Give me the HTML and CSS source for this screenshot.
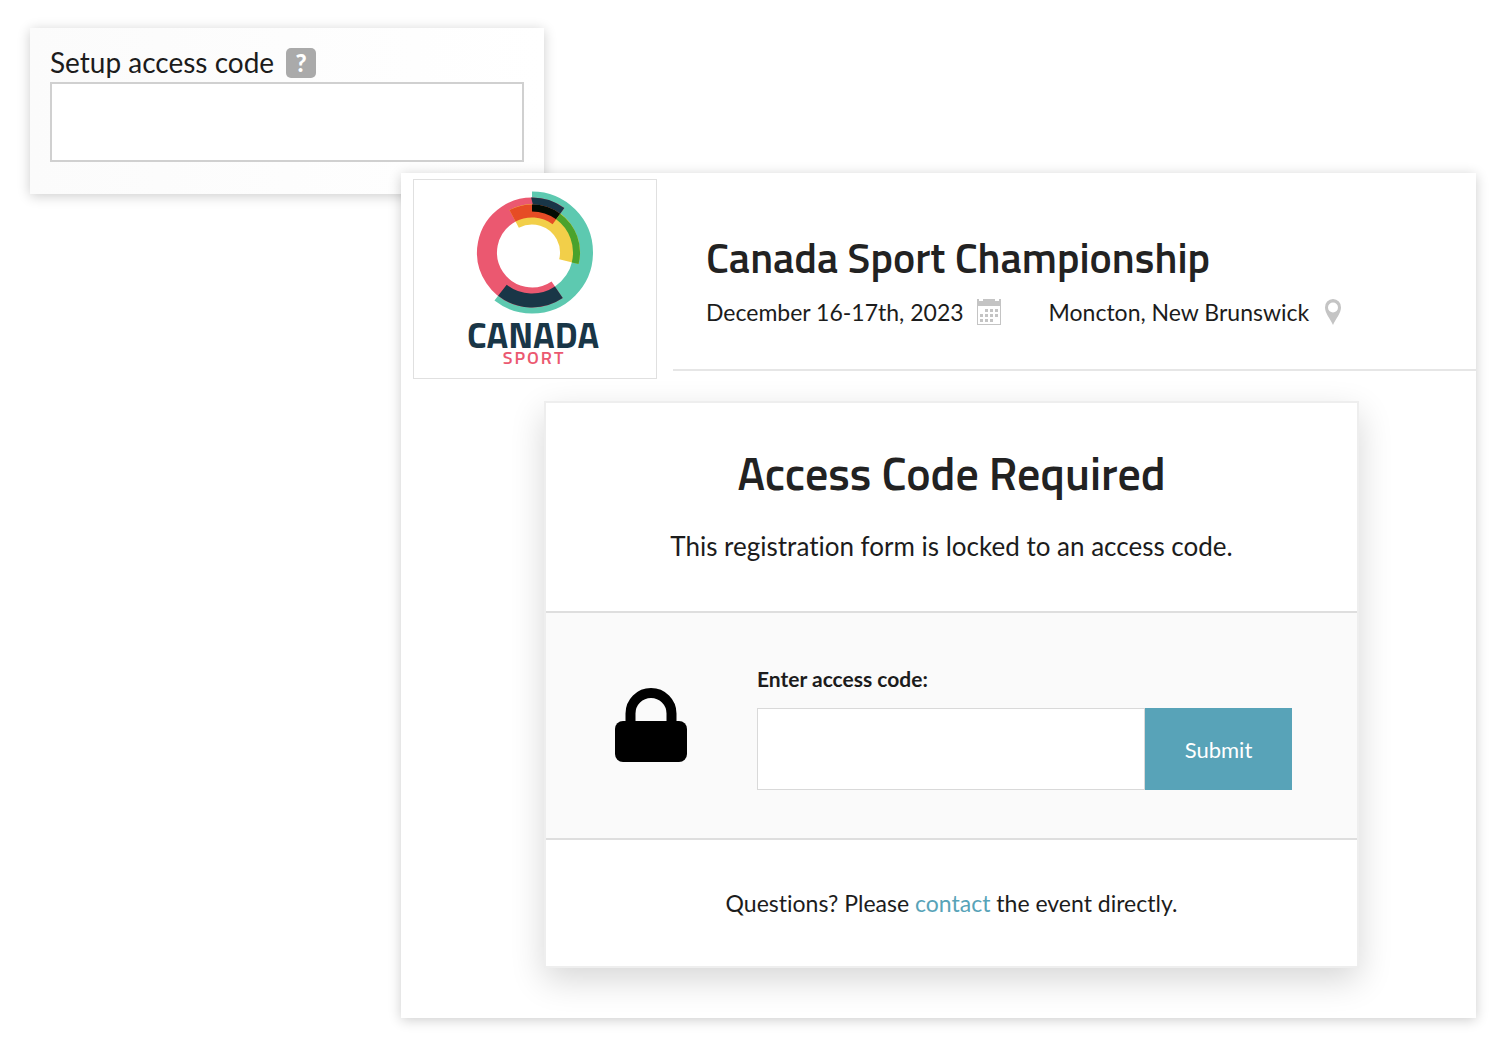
FILE: index.html
```html
<!DOCTYPE html>
<html lang="en">
<head>
<meta charset="utf-8">
<title>Canada Sport Championship</title>
<link rel="stylesheet" href="styles.css">
</head>
<body>
<div class="page">
  <section class="setup">
    <div class="setup-head">
      <label for="setup-code">Setup access code</label>
      <button class="help" type="button" aria-label="Help">?</button>
    </div>
    <input class="setup-input" id="setup-code" type="text">
  </section>

  <main class="event">
    <header class="event-header">
      <div class="logo">
        <svg viewBox="0 0 242 198" role="img" aria-label="Canada Sport">
          <g transform="translate(118 72.5)" fill="none">
            <g transform="rotate(-90)">
              <circle r="51" pathLength="360" stroke="#5dc9b0" stroke-width="20" stroke-dasharray="218 142"/>
              <circle r="45" pathLength="360" stroke="#eb5870" stroke-width="20" stroke-dasharray="250 110" transform="rotate(146)"/>
              <circle r="38" pathLength="360" stroke="#f2cf49" stroke-width="20" stroke-dasharray="132 228" transform="rotate(-28)"/>
              <circle r="48" pathLength="360" stroke="#193647" stroke-width="14" stroke-dasharray="72 288" transform="rotate(146)"/>
              <circle r="41.5" pathLength="360" stroke="#e64c25" stroke-width="13" stroke-dasharray="64 296" transform="rotate(-28)"/>
              <circle r="51.5" pathLength="360" stroke="#193647" stroke-width="7" stroke-dasharray="36 324"/>
              <circle r="44.5" pathLength="360" stroke="#040c03" stroke-width="7" stroke-dasharray="36 324"/>
              <circle r="44.5" pathLength="360" stroke="#4aa22c" stroke-width="7" stroke-dasharray="68 292" transform="rotate(36)"/>
            </g>
          </g>
          <text class="logo-name" x="119" y="168">CANADA</text>
          <text class="logo-sub" x="120" y="184">SPORT</text>
        </svg>
      </div>
      <div class="event-info">
        <h1>Canada Sport Championship</h1>
        <div class="meta">
          <span class="meta-item">December 16-17th, 2023
            <svg width="26" height="28" viewBox="0 0 26 28" aria-hidden="true">
              <path fill="#c4c4c4" fill-rule="evenodd" d="M1 1h2v2h4V1h12v2h4V1h2v26H1zM2 8v18h22V8z"/>
              <path fill="#c4c4c4" d="M9 11h3v3H9zM14 11h3v3h-3zM19 11h3v3h-3zM4 16h3v3H4zM9 16h3v3H9zM14 16h3v3h-3zM19 16h3v3h-3zM4 21h3v3H4zM9 21h3v3H9zM14 21h3v3h-3z"/>
            </svg>
          </span>
          <span class="meta-item">Moncton, New Brunswick
            <svg width="24" height="28" viewBox="0 0 24 28" aria-hidden="true">
              <path fill="#c4c4c4" fill-rule="evenodd" d="M12 1a8 8 0 0 1 8 8.500c0 5.500-5 11-8 17.500C9 20.500 4 15 4 9.500A8 8 0 0 1 12 1zm0 3.500a5 5 0 1 0 0 10 5 5 0 0 0 0-10z"/>
            </svg>
          </span>
        </div>
      </div>
    </header>

    <section class="access">
      <div class="access-intro">
        <h2>Access Code Required</h2>
        <p>This registration form is locked to an access code.</p>
      </div>
      <form class="access-form">
        <svg class="lock" width="72" height="78" viewBox="0 0 72 78" aria-hidden="true">
          <rect y="33" width="72" height="41" rx="8"/>
          <path d="M15.500 37V25.500a20.500 20.500 0 0 1 41 0V37" fill="none" stroke="#000" stroke-width="10"/>
        </svg>
        <div class="field">
          <label for="access-code">Enter access code:</label>
          <div class="field-row">
            <input id="access-code" type="text">
            <button class="submit" type="submit">Submit</button>
          </div>
        </div>
      </form>
      <p class="access-help">Questions? Please <a href="#contact">contact</a> the event directly.</p>
    </section>
  </main>
</div>
</body>
</html>
```
FILE: styles.css
```css
* {
  box-sizing: border-box;
}

body {
  margin: 0;
  background: #fff;
  color: #1c1c1c;
  font-family: Lato, "Liberation Sans", sans-serif;
  font-variant-ligatures: none;
}

h1, h2, p {
  margin: 0;
}

h1, h2 {
  color: #222;
  font-family: "Titillium Web", Roboto, sans-serif;
  font-weight: 600;
}

input {
  min-width: 0;
  margin: 0;
  padding: 0 16px;
  border: 1px solid #d9d9d9;
  border-radius: 0;
  background: #fff;
  font: inherit;
  outline: none;
}

button {
  margin: 0;
  padding: 0;
  border: 0;
  color: #fff;
  font-family: inherit;
  cursor: pointer;
}

.page {
  display: flex;
  flex-direction: column;
  padding: 28px 24px 32px 30px;
}

/* Setup panel, tucked under the corner of the event window */
.setup {
  width: 36%;
  max-width: 514px;
  padding: 16px 20px 32px;
  background: linear-gradient(to right, #fbfbfb, #fff);
  box-shadow: 0 2px 12px rgba(0, 0, 0, 0.2);
}

.setup-head {
  display: flex;
  align-items: center;
  gap: 12px;
  height: 38px;
  font-size: 28px;
  line-height: 32px;
}

.setup-head label {
  padding-bottom: 2px;
}

.help {
  width: 30px;
  height: 30px;
  border-radius: 5px;
  background: #aaa;
  font-size: 24px;
  font-weight: 900;
  line-height: 30px;
}

.setup-input {
  display: block;
  width: 100%;
  height: 80px;
  border: 2px solid #d0d0d0;
}

/* Event window */
.event {
  position: relative;
  margin: -21px 0 0 371px;
  padding-bottom: 50px;
  background: #fff;
  box-shadow: 0 2px 12px rgba(0, 0, 0, 0.2);
}

.event-header {
  display: flex;
  gap: 16px;
  padding: 6px 0 0 12px;
}

.logo {
  flex: none;
  width: 244px;
  border: 1px solid #e0e0e0;
}

.logo svg {
  display: block;
  width: 100%;
}

.logo-name,
.logo-sub {
  font-family: "Titillium Web", Roboto, sans-serif;
  text-anchor: middle;
}

.logo-name {
  fill: #193647;
  font-size: 36px;
  font-weight: 700;
}

.logo-sub {
  fill: #eb5870;
  font-size: 18px;
  font-weight: 600;
  letter-spacing: 2px;
}

.event-info {
  flex: 1;
  margin-bottom: 8px;
  padding: 54px 0 0 33px;
  border-bottom: 2px solid #e6e6e6;
}

h1 {
  font-size: 42px;
  line-height: 48px;
}

.meta {
  display: flex;
  gap: 47px;
  margin-top: 17px;
  font-size: 23px;
  line-height: 28px;
}

.meta-item {
  display: flex;
  align-items: center;
  gap: 12px;
}

/* Access code card */
.access {
  margin: 22px 117px 0 143px;
  border: 2px solid #eee;
  background: #fff;
  box-shadow: 0 12px 32px rgba(0, 0, 0, 0.16);
}

.access-intro {
  padding: 42px 20px 48px;
  text-align: center;
}

h2 {
  font-size: 46px;
  line-height: 56px;
}

.access-intro p {
  margin-top: 28px;
  font-size: 26px;
  line-height: 34px;
}

.access-form {
  display: flex;
  align-items: center;
  gap: 70px;
  padding: 51px 65px 48px 69px;
  border: solid #dedede;
  border-width: 2px 0;
  background: #fafafa;
}

.lock {
  flex: none;
}

.field {
  flex: 1;
  font-size: 22px;
}

.field label {
  display: block;
  margin-bottom: 14px;
  font-size: 21px;
  font-weight: 700;
  line-height: 30px;
}

.field-row {
  display: flex;
  height: 82px;
}

.field-row input {
  flex: 1;
}

.submit {
  width: 147px;
  background: #58a3b8;
  font-size: 22px;
}

.access-help {
  padding: 48px 20px;
  font-size: 23px;
  line-height: 30px;
  text-align: center;
}

.access-help a {
  color: #58a3b8;
  text-decoration: none;
}
```
